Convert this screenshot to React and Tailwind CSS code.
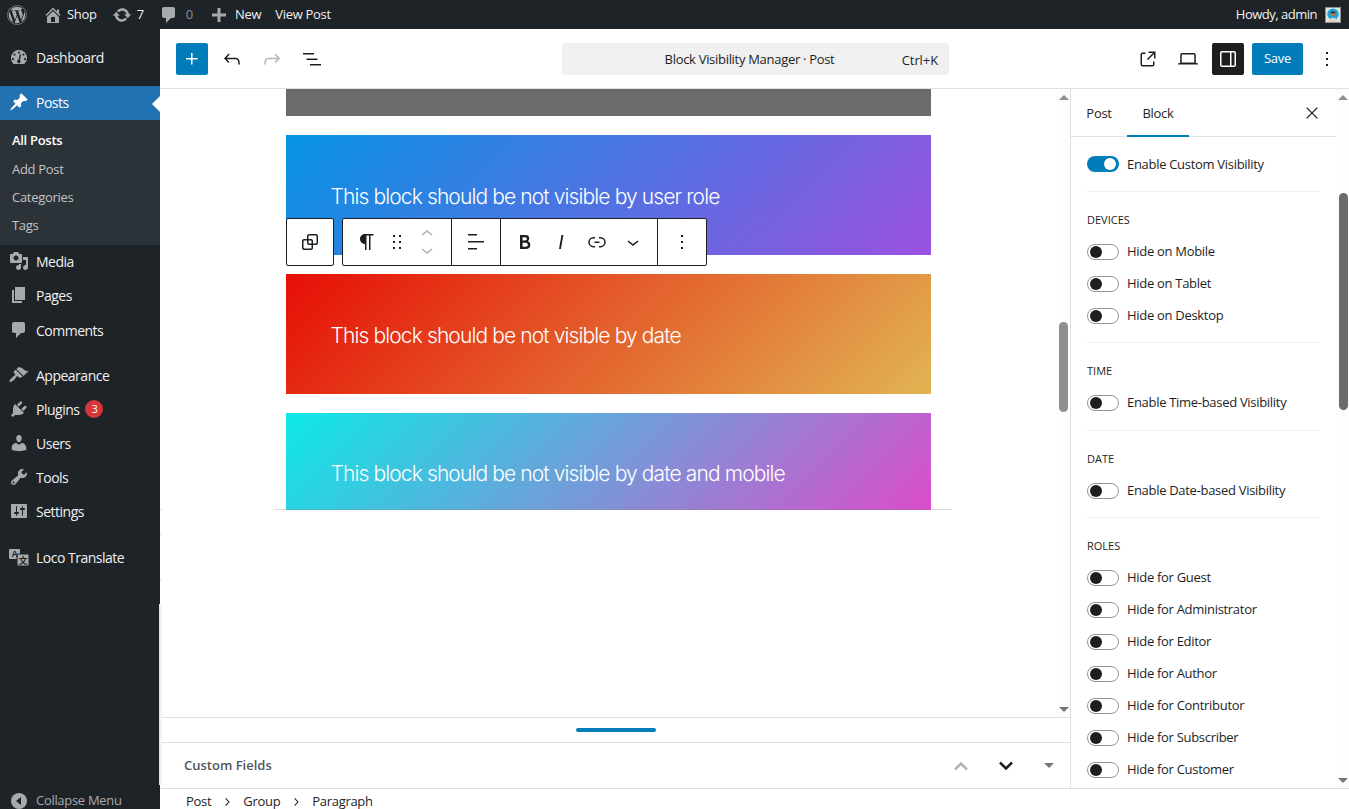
import { FaWordpress } from 'react-icons/fa';

const font = 'font-["Open_Sans","Noto_Sans",sans-serif]';

const Wp = ({ d, size = 24, className = '' }) => (
  <svg viewBox="0 0 24 24" width={size} height={size} fill="currentColor" className={className}>
    <path d={d} />
  </svg>
);

const paths = {
  plus: 'M11 12.5V17.5H12.5V12.5H17.5V11H12.5V6H11V11H6V12.5H11Z',
  undo: 'M18.3 11.7c-.6-.6-1.4-.9-2.3-.9H6.7l2.9-3.3-1.1-1-4.5 5L8.5 16l1-1-2.7-2.7H16c.5 0 .9.2 1.3.5 1 1 1 3.4 1 4.5v.3h1.5v-.2c0-1.5 0-4.3-1.5-5.7z',
  redo: 'M15.6 6.5l-1.1 1 2.9 3.3H8c-.9 0-1.7.3-2.3.9-1.4 1.5-1.4 4.2-1.4 5.6v.2h1.5v-.3c0-1.1 0-3.5 1-4.5.3-.3.7-.5 1.3-.5h9.2L14.5 15l1.1 1.1 4.6-4.6-4.6-5z',
  list: 'M3 6h11v1.5H3V6Zm3.5 5.5h11V13h-11v-1.5ZM21 17H10v1.5h11V17Z',
  external: 'M19.5 4.5h-7V6h4.44l-5.97 5.97 1.06 1.06L18 7.06v4.44h1.5v-7Zm-13 1a2 2 0 0 0-2 2v10a2 2 0 0 0 2 2h10a2 2 0 0 0 2-2v-3H17v3a.5.5 0 0 1-.5.5h-10a.5.5 0 0 1-.5-.5v-10a.5.5 0 0 1 .5-.5h3V5.5h-3Z',
  laptop: 'M20.5 16h-.7V8c0-1.1-.9-2-2-2H6.2c-1.1 0-2 .9-2 2v8h-.7c-.8 0-1.5.7-1.5 1.5h20c0-.8-.7-1.5-1.5-1.5zM5.7 8c0-.3.2-.5.5-.5h11.6c.3 0 .5.2.5.5v7.6H5.7V8z',
  drawer: 'M18 4H6c-1.1 0-2 .9-2 2v12c0 1.1.9 2 2 2h12c1.1 0 2-.9 2-2V6c0-1.1-.9-2-2-2zm-4 14.5H6c-.3 0-.5-.2-.5-.5V6c0-.3.2-.5.5-.5h8v13zm4.5-.5c0 .3-.2.5-.5.5h-2.5v-13H18c.3 0 .5.2.5.5v12z',
  more: 'M13 19h-2v-2h2v2zm0-6h-2v-2h2v2zm0-6h-2V5h2v2z',
  close: 'm13.06 12 6.47-6.47-1.06-1.06L12 10.94 5.53 4.47 4.47 5.53 10.94 12l-6.47 6.47 1.06 1.06L12 13.06l6.47 6.47 1.06-1.06L13.06 12Z',
  paragraph: 'm9.99609 14v-.2251l.00391.0001v6.225h1.5v-14.5h2.5v14.5h1.5v-14.5h3v-1.5h-8.50391c-2.76142 0-5 2.23858-5 5 0 2.7614 2.23858 5 5 5z',
  drag: 'M8 7h2V5H8v2zm0 6h2v-2H8v2zm0 6h2v-2H8v2zm6-14v2h2V5h-2zm0 8h2v-2h-2v2zm0 6h2v-2h-2v2z',
  up: 'M6.5 12.4L12 8l5.5 4.4-.9 1.2L12 10l-4.5 3.6-1-1.2z',
  down: 'M17.5 11.6L12 16l-5.5-4.4.9-1.2L12 14l4.5-3.6 1 1.2z',
  align: 'M13 5.5H4V4h9v1.5Zm7 7H4V11h16v1.5Zm-7 7H4V18h9v1.5Z',
  bold: 'M14.7 11.3c1-.6 1.5-1.6 1.5-3 0-2.3-1.3-3.4-4-3.4H7v14h5.8c1.4 0 2.5-.3 3.3-1 .8-.7 1.2-1.7 1.2-2.9.1-1.9-.8-3.1-2.6-3.7zm-5.1-4h2.3c.6 0 1.1.1 1.4.4.3.3.5.7.5 1.2s-.2 1-.5 1.2c-.3.3-.8.4-1.4.4H9.6V7.3zm4.6 9c-.4.3-1 .4-1.7.4H9.6v-3.9h2.9c.7 0 1.3.2 1.7.5.4.3.6.8.6 1.5s-.2 1.2-.6 1.5z',
  italic: 'M12.5 5L10 19h1.9l2.5-14z',
  link: 'M10 17.389H8.444A5.194 5.194 0 1 1 8.444 7H10v1.5H8.444a3.694 3.694 0 0 0 0 7.389H10v1.5ZM14 7h1.556a5.194 5.194 0 0 1 0 10.39H14v-1.5h1.556a3.694 3.694 0 0 0 0-7.39H14V7Zm-4.5 6h5v-1.5h-5V13Z',
  group: 'M18 4h-7c-1.1 0-2 .9-2 2v3H6c-1.1 0-2 .9-2 2v7c0 1.1.9 2 2 2h7c1.1 0 2-.9 2-2v-3h3c1.1 0 2-.9 2-2V6c0-1.1-.9-2-2-2zm-4.5 14c0 .3-.2.5-.5.5H6c-.3 0-.5-.2-.5-.5v-7c0-.3.2-.5.5-.5h3V13c0 1.1.9 2 2 2h2.5v3zm0-4.5H11c-.3 0-.5-.2-.5-.5v-2.5H13c.3 0 .5.2.5.5v2.5zm5-.5c0 .3-.2.5-.5.5h-3V11c0-1.1-.9-2-2-2h-2.5V6c0-.3.2-.5.5-.5h7c.3 0 .5.2.5.5v7z',
  crumb: 'M10.6 6L9.4 7l4.6 5-4.6 5 1.2 1 5.4-6z',
};

// dashicons, 20x20 box
const dash = {
  post: 'M10.44 3.02l1.82-1.82 6.36 6.35-1.83 1.82c-1.05-.68-2.48-.57-3.41.36l-.75.75c-.92.93-1.04 2.35-.35 3.41l-1.83 1.82-2.41-2.41-2.8 2.79c-.42.42-3.38 2.71-3.8 2.29s1.86-3.39 2.28-3.81l2.79-2.79L4.1 9.36l1.83-1.82c1.05.69 2.48.57 3.4-.36l.75-.75c.93-.92 1.05-2.35.36-3.41z',
  media: 'M13 11V4c0-.55-.45-1-1-1h-1.67L9 1H5L3.67 3H2c-.55 0-1 .45-1 1v7c0 .55.45 1 1 1h10c.55 0 1-.45 1-1zM7 4.5c1.38 0 2.5 1.12 2.5 2.5S8.38 9.5 7 9.5 4.5 8.38 4.5 7 5.62 4.5 7 4.5zM14 6h5v10.5c0 1.38-1.12 2.5-2.5 2.5S14 17.88 14 16.5s1.12-2.5 2.5-2.5c.17 0 .34.02.5.05V9h-3V6zm-4 8.05V13h2v3.5c0 1.38-1.12 2.5-2.5 2.5S7 17.88 7 16.5 8.12 14 9.5 14c.17 0 .34.02.5.05z',
  page: 'M6 15V2h10v13H6zm-1 1h8v2H3V5h2v11z',
  comment: 'M5 2h9c1.1 0 2 .9 2 2v7c0 1.1-.9 2-2 2h-2l-5 5v-5H5c-1.1 0-2-.9-2-2V4c0-1.1.9-2 2-2z',
  appearance: 'M14.48 11.06L7.41 3.99l1.5-1.5c.5-.56 2.3-.47 3.51.32 1.21.8 1.43 1.28 2.91 2.1 1.18.64 2.45 1.26 4.45.85zm-.71.71L6.7 4.7 4.93 6.47c-.39.39-.39 1.02 0 1.41l1.06 1.06c.39.39.39 1.03 0 1.42-.6.6-1.43 1.11-2.21 1.69-.35.26-.7.53-1.01.84C1.43 13.71-.05 16.06.7 16.8c.75.75 3.09-.73 4.45-2.08.31-.31.58-.66.84-1.01.58-.78 1.09-1.61 1.69-2.21.39-.39 1.03-.39 1.42 0l1.06 1.06c.39.39 1.02.39 1.41 0z',
  plugins: 'M13.11 4.36L9.87 7.6 8 5.73l3.24-3.24c.35-.34 1.05-.2 1.56.32.52.51.66 1.21.31 1.55zm-8 1.77l.91-1.12 9.01 9.01-1.19.84c-.71.71-2.63 1.16-3.82 1.16H6.14L4.9 17.26c-.59.59-1.54.59-2.12 0-.59-.58-.59-1.53 0-2.12l1.24-1.24v-3.88c0-1.13.4-3.19 1.09-3.89zm7.26 3.97l3.24-3.24c.34-.35 1.04-.21 1.55.31.52.51.66 1.21.31 1.55l-3.24 3.25z',
  users: 'M10 9.25c-2.27 0-2.73-3.44-2.73-3.44C7 4.02 7.82 2 9.97 2c2.16 0 2.98 2.02 2.71 3.81 0 0-.41 3.44-2.68 3.44zm0 2.57L12.72 10c2.39 0 4.52 2.33 4.52 4.53v2.49s-3.65 1.13-7.24 1.13c-3.65 0-7.24-1.13-7.24-1.13v-2.49c0-2.25 1.94-4.48 4.47-4.48z',
  tools: 'M16.68 9.77c-1.34 1.34-3.3 1.67-4.95.99l-5.41 6.52c-.99.99-2.59.99-3.58 0s-.99-2.59 0-3.57l6.52-5.42c-.68-1.65-.35-3.61.99-4.95 1.28-1.28 3.12-1.62 4.72-1.06l-2.89 2.89 2.82 2.82 2.86-2.87c.53 1.58.18 3.39-1.08 4.65zM3.81 16.21c.4.39 1.04.39 1.43 0 .4-.4.4-1.04 0-1.43-.39-.4-1.03-.4-1.43 0-.39.39-.39 1.03 0 1.43z',
  settings: 'M18 16V4c0-.55-.45-1-1-1H3c-.55 0-1 .45-1 1v12c0 .55.45 1 1 1h14c.55 0 1-.45 1-1zM8 11h1c.55 0 1 .45 1 1s-.45 1-1 1H8v1.5c0 .28-.22.5-.5.5s-.5-.22-.5-.5V13H6c-.55 0-1-.45-1-1s.45-1 1-1h1V5.5c0-.28.22-.5.5-.5s.5.22.5.5V11zm5-2h-1c-.55 0-1-.45-1-1s.45-1 1-1h1V5.5c0-.28.22-.5.5-.5s.5.22.5.5V7h1c.55 0 1 .45 1 1s-.45 1-1 1h-1v5.5c0 .28-.22.5-.5.5s-.5-.22-.5-.5V9z',
  home: 'M16 8.5l1.53 1.53-1.06 1.06L10 4.62l-6.47 6.47-1.06-1.06L10 2.5l4 4v-2h2v4zm-6-2.46l6 5.99V18H4v-5.97zM12 17v-5H8v5h4z',
  update: 'M10.2 3.28c3.53 0 6.43 2.61 6.92 6h2.08l-3.5 4-3.5-4h2.32c-.45-1.97-2.21-3.44-4.32-3.44-1.45 0-2.73.71-3.54 1.78L4.95 5.66C6.23 4.2 8.11 3.28 10.2 3.28zm-.4 13.44c-3.52 0-6.43-2.61-6.92-6H.8l3.5-4c1.17 1.33 2.33 2.67 3.5 4H5.48c.45 1.97 2.21 3.44 4.32 3.44 1.45 0 2.73-.71 3.54-1.77l1.71 1.95c-1.28 1.47-3.16 2.38-5.25 2.38z',
  add: 'M8.5 3h3v5.500H17v3h-5.500V17h-3v-5.500H3v-3h5.500z',
  dashboard: 'M10 3a8 8 0 0 0-8 8c0 2.4 1 4.500 2.700 6h10.600A8 8 0 0 0 18 11a8 8 0 0 0-8-8zM10 4.500a1.100 1.100 0 1 1 0 2.200 1.100 1.100 0 0 1 0-2.200zM5.500 6.500a1.100 1.100 0 1 1 0 2.200 1.100 1.100 0 0 1 0-2.200zM14.500 6.500a1.100 1.100 0 1 1 0 2.200 1.100 1.100 0 0 1 0-2.200zM4 11a1.100 1.100 0 1 1 0 2.200A1.100 1.100 0 0 1 4 11zM16 11a1.100 1.100 0 1 1 0 2.200 1.100 1.100 0 0 1 0-2.200zM12.200 7.500l-1.300 5.600a1.700 1.700 0 1 1-1.500-.3l1.500-5.500z',
};

const Dash = ({ d, size = 20, className = '' }) => (
  <svg viewBox="0 0 20 20" width={size} height={size} fill="currentColor" fillRule="evenodd" className={className}>
    <path d={d} />
  </svg>
);

const LocoIcon = () => (
  <svg viewBox="0 0 20 20" width={20} height={20} className="text-[#a7aaad]">
    <rect x="0" y="2" width="11" height="10" rx="1" fill="currentColor" />
    <rect x="8" y="7" width="12" height="12" rx="1" fill="currentColor" stroke="#1d2327" strokeWidth="1" />
    <text x="2.500" y="10" fontSize="9" fontWeight="700" fill="#1d2327" fontFamily="Liberation Sans, sans-serif">A</text>
    <text x="9.500" y="17" fontSize="9" fontWeight="700" fill="#1d2327" fontFamily="Noto Sans CJK SC, sans-serif">文</text>
  </svg>
);

const menuTop = [
  { label: 'Media', icon: <Dash d={dash.media} />, cls: '-mt-px' },
  { label: 'Pages', icon: <Dash d={dash.page} /> },
  { label: 'Comments', icon: <Dash d={dash.comment} />, cls: 'mt-px' },
];
const menuMid = [
  { label: 'Appearance', icon: <Dash d={dash.appearance} /> },
  { label: 'Plugins', icon: <Dash d={dash.plugins} />, badge: 3 },
  { label: 'Users', icon: <Dash d={dash.users} /> },
  { label: 'Tools', icon: <Dash d={dash.tools} /> },
  { label: 'Settings', icon: <Dash d={dash.settings} /> },
];

const MenuRow = ({ label, icon, badge, cls = '' }) => (
  <div className={`flex h-[34px] items-center text-[14px] tracking-[-0.5px] text-[#f0f0f1] ${cls}`}>
    <span className="flex w-9 shrink-0 items-center justify-center pl-px text-[#a7aaad]">{icon}</span>
    <span>{label}</span>
    {badge && (
      <span className="ml-[6px] flex h-[18px] w-[18px] items-center justify-center rounded-full bg-[#d63638] text-[11px] text-white">
        {badge}
      </span>
    )}
  </div>
);

const Sidebar = () => (
  <aside className="relative flex w-40 shrink-0 flex-col bg-[#1d2327] pt-[11px]">
    <MenuRow label="Dashboard" icon={<Dash d={dash.dashboard} />} />
    <div className="relative mt-[12px] flex h-[34px] items-center bg-[#2271b1] pb-[2px] text-[14px] tracking-[-0.5px] text-white">
      <span className="flex w-9 shrink-0 items-center justify-center pl-px">
        <Dash d={dash.post} />
      </span>
      <span>Posts</span>
      <span className="absolute right-0 top-[10px] h-0 w-0 border-y-[8px] border-r-[8px] border-y-transparent border-r-white" />
    </div>
    <div className="flex h-[125px] flex-col bg-[#2c3338] pt-[7px] text-[13px] text-[#c3c4c7]">
      <div className="flex h-[28px] items-center pl-3 font-semibold text-white">All Posts</div>
      <div className="mt-px flex h-[28px] items-center pl-3">Add Post</div>
      <div className="flex h-[28px] items-center pl-3">Categories</div>
      <div className="flex h-[28px] items-center pl-3">Tags</div>
    </div>
    {menuTop.map((m) => <MenuRow key={m.label} {...m} />)}
    <div className="h-[11px]" />
    {menuMid.map((m) => <MenuRow key={m.label} {...m} />)}
    <div className="h-3" />
    <MenuRow label="Loco Translate" icon={<LocoIcon />} />
    <div className="mt-auto -mb-[9px] flex h-[34px] items-center text-[13px] text-[#a7aaad]">
      <span className="flex w-9 shrink-0 items-center justify-center pl-px">
        <span className="flex h-4 w-4 items-center justify-center rounded-full bg-[#a7aaad]">
          <span className="mr-px h-0 w-0 border-y-[4px] border-r-[5px] border-y-transparent border-r-[#1d2327]" />
        </span>
      </span>
      <span>Collapse Menu</span>
    </div>
    <span className="absolute right-0 top-[575px] h-[181px] w-px bg-[#e4e4e4]" />
  </aside>
);

const AdminBar = () => (
  <header className="flex h-[29px] shrink-0 items-center justify-between bg-[#1d2327] text-[13px] text-[#f0f0f1]">
    <div className="flex items-center">
      <FaWordpress size={20} className="ml-[7px] text-[#a7aaad]" />
      <span className="ml-[16px] flex items-center gap-[4px]">
        <Dash d={dash.home} className="text-[#a7aaad]" />
        Shop
      </span>
      <span className="ml-[15px] flex items-center gap-[5px]">
        <Dash d={dash.update} className="text-[#a7aaad]" />
        7
      </span>
      <span className="ml-[15px] flex items-center gap-[7px] text-[#a7aaad]">
        <Dash d={dash.comment} />
        <span className="text-[#8c8f94]">0</span>
      </span>
      <span className="ml-[16px] flex items-center gap-[6px]">
        <Dash d={dash.add} className="text-[#a7aaad]" />
        New
      </span>
      <span className="ml-[14px]">View Post</span>
    </div>
    <div className="flex items-center gap-2 pr-2">
      <span className="tracking-[-0.5px]">Howdy, admin</span>
      <svg viewBox="0 0 16 16" width={16} height={16} className="border border-[#8c8f94] bg-[#e8e4dc]">
        <circle cx="8" cy="7" r="6.500" fill="#14a5e0" />
        <path d="M3 16c0-4 2-5 5-5s5 1 5 5z" fill="#d8d4cc" />
        <circle cx="8" cy="6.500" r="3" fill="#a8785c" />
        <path d="M5 5.500c0-2 6-2 6 0l-1 .5H6z" fill="#3b2a20" />
      </svg>
    </div>
  </header>
);

const Toolbtn = ({ d, cls = 'text-[#1e1e1e]', size = 24 }) => <Wp d={d} size={size} className={cls} />;

const EditorHeader = () => (
  <div className="flex h-[60px] shrink-0 items-center border-b border-[#e0e0e0] bg-white pt-px">
    <div className="flex w-[402px] shrink-0 items-center pl-4">
      <span className="flex h-8 w-8 items-center justify-center rounded-[2px] bg-[#007cba] text-white">
        <Wp d={paths.plus} />
      </span>
      <span className="ml-1 flex w-10 justify-center"><Toolbtn d={paths.undo} /></span>
      <span className="flex w-10 justify-center"><Toolbtn d={paths.redo} cls="text-[#b8b8b8]" /></span>
      <span className="flex w-10 justify-center"><Toolbtn d={paths.list} /></span>
    </div>
    <div className="relative flex h-8 w-[387px] shrink-0 items-center justify-center rounded-[4px] bg-[#f0f0f0] pr-3 pt-px text-[13px] text-[#1e1e1e]">
      <span>Block Visibility Manager · Post</span>
      <span className="absolute right-[11px] top-[8px] tracking-[-0.1px]">Ctrl+K</span>
    </div>
    <div className="ml-auto flex items-center pr-[10px]">
      <span className="flex w-10 justify-center"><Toolbtn d={paths.external} /></span>
      <span className="flex w-10 justify-center"><Toolbtn d={paths.laptop} /></span>
      <span className="ml-1 flex h-8 w-8 items-center justify-center rounded-[2px] bg-[#1e1e1e] text-white"><Wp d={paths.drawer} /></span>
      <span className="ml-2 flex h-8 w-[51px] items-center justify-center rounded-[2px] bg-[#007cba] text-[13px] text-white">Save</span>
      <span className="ml-3 flex w-6 justify-center"><Toolbtn d={paths.more} /></span>
    </div>
  </div>
);

const ArrowUp = ({ cls = 'border-b-[#8f8f8f]' }) => <span className={`h-0 w-0 border-x-[5px] border-b-[5px] border-x-transparent ${cls}`} />;
const ArrowDown = ({ cls = 'border-t-[#757575]' }) => <span className={`h-0 w-0 border-x-[5px] border-t-[5px] border-x-transparent ${cls}`} />;

const Scrollbar = ({ top, height, color, w = 'w-[14px]' }) => (
  <div className={`relative flex shrink-0 flex-col items-center justify-between bg-[#fdfdfd] pb-[5px] pl-px pt-[6px] ${w}`}>
    <ArrowUp />
    <ArrowDown />
    <span className={`absolute left-[3px] w-[9px] rounded-full ${top} ${height} ${color}`} />
  </div>
);

const blockText = 'flex pl-[45px] font-["Inter",sans-serif] text-[21px] font-light tracking-[-0.88px] text-white';

const BlockToolbar = () => (
  <div className="absolute left-[126px] top-[129px] flex text-[#1e1e1e]">
    <div className="flex h-[48px] w-[48px] items-center justify-center rounded-[2px] border border-[#1e1e1e] bg-white">
      <Wp d={paths.group} />
    </div>
    <div className="ml-2 flex h-[48px] w-[365px] items-center rounded-[2px] border border-[#1e1e1e] bg-white">
      <div className="flex h-full w-[109px] items-center border-r border-[#1e1e1e] pl-3">
        <Wp d={paths.paragraph} />
        <Wp d={paths.drag} className="ml-[6px]" />
        <div className="ml-[6px] flex flex-col text-[#b0b0b0]">
          <Wp d={paths.up} className="-mb-1" />
          <Wp d={paths.down} className="-mt-1" />
        </div>
      </div>
      <div className="flex h-full w-[49px] items-center justify-center border-r border-[#1e1e1e]">
        <Wp d={paths.align} />
      </div>
      <div className="flex h-full w-[157px] items-center border-r border-[#1e1e1e] pl-3">
        <Wp d={paths.bold} />
        <Wp d={paths.italic} className="ml-3" />
        <Wp d={paths.link} className="ml-3" />
        <Wp d={paths.down} className="ml-3" />
      </div>
      <div className="flex flex-1 items-center justify-center">
        <Wp d={paths.more} />
      </div>
    </div>
  </div>
);

const Canvas = () => (
  <div className="relative flex-1 overflow-hidden bg-white">
    <div className="mx-auto flex w-[645px] flex-col gap-[19px]">
      <div className="h-[27px] bg-[#6b6b6b]" />
      <div className={`${blockText} h-[120px] items-center pt-[3px] bg-[linear-gradient(135deg,#0693e3,#9b51e0)]`}>
        This block should be not visible by user role
      </div>
      <div className={`${blockText} h-[120px] items-center pt-[3px] bg-[linear-gradient(135deg,#e60e06,#e1b453)]`}>
        This block should be not visible by date
      </div>
      <div className={`${blockText} h-[97px] items-start pt-[45px] bg-[linear-gradient(135deg,#0de9e6,#dc4ccb)]`}>
        This block should be not visible by date and mobile
      </div>
    </div>
    <BlockToolbar />
    <div className="absolute left-[114px] top-[420px] h-px w-[678px] bg-[#888888]/30" />
    <span className="absolute left-0 top-[420px] h-px w-[2px] bg-[#dddddd]" />
    <span className="absolute left-0 top-[445px] h-px w-[2px] bg-[#dddddd]" />
    <span className="absolute left-0 top-[490px] h-px w-[2px] bg-[#dddddd]" />
  </div>
);

const BigChevron = ({ up, cls }) => (
  <svg viewBox="0 0 16 10" width={16} height={10} fill="none" stroke="currentColor" strokeWidth="2.500" className={cls}>
    <path d={up ? 'M2 8.500l6-6 6 6' : 'M2 1.500l6 6 6-6'} />
  </svg>
);

const EditorMain = () => (
  <div className="relative flex min-w-0 flex-1 flex-col">
    <div className="flex h-[628px] shrink-0">
      <Canvas />
      <Scrollbar top="top-[233px]" height="h-[90px]" color="bg-[#8f8f8f]" />
    </div>
    <div className="flex h-[26px] shrink-0 items-center justify-center border-y border-[#e0e0e0] bg-white">
      <span className="mr-[-1px] h-1 w-20 rounded-full bg-[#007cba]" />
    </div>
    <div className="flex flex-1 items-center justify-between bg-white pl-6 pr-4 text-[13px] font-semibold tracking-normal text-[#50575e]">
      <span>Custom Fields</span>
      <div className="flex items-center">
        <BigChevron up cls="text-[#b4b4b4]" />
        <BigChevron cls="ml-[29px] text-[#1e1e1e]" />
        <span className="ml-[30px] flex"><ArrowDown /></span>
      </div>
    </div>
    <span className="absolute left-0 top-[515px] h-[181px] w-[2px] bg-[#f3f3f3]" />
  </div>
);

const Toggle = ({ on }) =>
  on ? (
    <span className="flex h-4 w-8 shrink-0 items-center justify-end rounded-full bg-[#007cba] pr-[3px]">
      <span className="h-[12px] w-[12px] rounded-full bg-white" />
    </span>
  ) : (
    <span className="flex h-4 w-8 shrink-0 items-center rounded-full border border-[#949494] bg-white pl-[2px]">
      <span className="h-[12px] w-[12px] rounded-full bg-[#1e1e1e]" />
    </span>
  );

const ToggleRow = ({ label }) => (
  <div className="flex h-8 items-center gap-2 text-[13px] text-[#1e1e1e]">
    <Toggle />
    <span>{label}</span>
  </div>
);

const Section = ({ title, items, cls = '' }) => (
  <div className={cls}>
    <div className="h-[44px] pt-[20px] text-[11px] font-medium uppercase leading-4 tracking-normal text-[#1e1e1e]">{title}</div>
    {items.map((i) => <ToggleRow key={i} label={i} />)}
  </div>
);

const SettingsPanel = () => (
  <div className="flex w-[279px] shrink-0 border-l border-[#e0e0e0]">
    <div className="flex min-w-0 flex-1 flex-col overflow-hidden bg-white">
      <div className="flex h-[48px] shrink-0 items-stretch justify-between border-b border-[#e0e0e0] text-[13px] text-[#1e1e1e]">
        <div className="flex">
          <span className="flex w-[56px] items-center justify-center pt-[3px]">Post</span>
          <span className="-mb-px flex w-[62px] items-center justify-center border-b-2 border-[#007cba] pt-[3px]">Block</span>
        </div>
        <span className="flex items-center pr-[15px]"><Wp d={paths.close} size={18} /></span>
      </div>
      <div className="px-4">
        <div className="flex h-[55px] items-center border-b border-[#f0f0f0]">
          <div className="flex items-center gap-2 text-[13px] text-[#1e1e1e]">
            <Toggle on />
            <span className="pt-px">Enable Custom Visibility</span>
          </div>
        </div>
        <Section title="Devices" cls="border-b border-[#f0f0f0] pb-[10px]" items={['Hide on Mobile', 'Hide on Tablet', 'Hide on Desktop']} />
        <Section title="Time" cls="border-b border-[#f0f0f0] pb-[11px]" items={['Enable Time-based Visibility']} />
        <Section title="Date" cls="border-b border-[#f0f0f0] pb-[10px]" items={['Enable Date-based Visibility']} />
        <Section title="Roles" items={['Hide for Guest', 'Hide for Administrator', 'Hide for Editor', 'Hide for Author', 'Hide for Contributor', 'Hide for Subscriber', 'Hide for Customer']} />
      </div>
    </div>
    <Scrollbar w="w-[13px]" top="top-[104px]" height="h-[217px]" color="bg-[#6b6b6b]" />
  </div>
);

const Breadcrumb = () => (
  <div className="flex h-[21px] shrink-0 items-center border-t border-[#e0e0e0] bg-white pl-[26px] pt-[5px] text-[13px] text-[#1e1e1e]">
    <span>Post</span>
    <Wp d={paths.crumb} size={16} className="mx-2" />
    <span>Group</span>
    <Wp d={paths.crumb} size={16} className="mx-2" />
    <span>Paragraph</span>
  </div>
);

export default function App() {
  return (
    <div className={`flex h-[809px] w-full flex-col overflow-hidden bg-white tracking-[-0.3px] ${font}`}>
      <AdminBar />
      <div className="flex min-h-0 flex-1">
        <Sidebar />
        <div className="flex min-w-0 flex-1 flex-col">
          <EditorHeader />
          <div className="flex min-h-0 flex-1">
            <EditorMain />
            <SettingsPanel />
          </div>
          <Breadcrumb />
        </div>
      </div>
    </div>
  );
}
